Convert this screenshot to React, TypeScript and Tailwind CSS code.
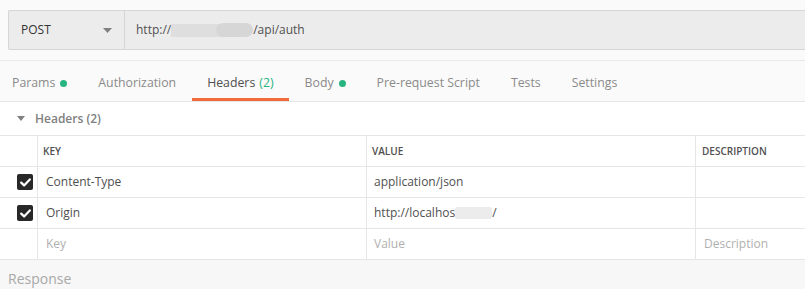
import React from "react";

const font = { fontFamily: '"Open Sans", "Liberation Sans", sans-serif' };

function Check() {
  return (
    <div className="w-[16px] h-[16px] rounded-[2px] bg-[#282828] flex items-center justify-center">
      <svg width="11" height="9" viewBox="0 0 11 9">
        <path d="M1.2 4.6 L4.1 7.4 L9.8 1.4" fill="none" stroke="#fff" strokeWidth="2.2" strokeLinecap="round" strokeLinejoin="round" />
      </svg>
    </div>
  );
}

function Dot() {
  return <span className="inline-block w-[7px] h-[7px] rounded-full bg-[#26b47f] ml-[5px]" />;
}

export default function App() {
  const tabs = [
    { label: "Params", dot: true },
    { label: "Authorization" },
    { label: "Headers", count: "(2)", active: true },
    { label: "Body", dot: true },
    { label: "Pre-request Script" },
    { label: "Tests" },
    { label: "Settings" },
  ];
  return (
    <div className="w-[805px] h-[289px] overflow-hidden bg-[#fafafa] text-[12px] text-[#505050]" style={font}>
      {/* URL bar */}
      <div className="pt-[10px] pl-[8px] pb-[10px] border-b border-[#e9e9e9]">
        <div className="h-[40px] flex bg-[#ececec] border border-[#d6d6d6] border-r-0 rounded-l-[2px]">
          <div className="w-[116px] flex items-center justify-between pl-[12px] pr-[12px] border-r border-[#d6d6d6] text-[#333]">
            <span>POST</span>
            <svg width="9" height="5" viewBox="0 0 9 5">
              <path d="M0 0 L9 0 L4.5 5 Z" fill="#808080" />
            </svg>
          </div>
          <div className="flex items-center pl-[11px] text-[#505050]">
            <span>http://</span>
            <span className="relative inline-block w-[82px] h-[14px]">
              <span className="absolute left-0 top-[1px] w-[55px] h-[13px] bg-[#dedede]" />
              <span className="absolute left-[45px] top-0 w-[37px] h-[14px] rounded-[7px] bg-[#d6d6d6]" />
            </span>
            <span>/api/auth</span>
          </div>
        </div>
      </div>

      {/* Tabs */}
      <div className="flex pl-[12px] gap-[31px] border-b border-[#e6e6e6] h-[41px] text-[12.3px]">
        {tabs.map((t) => (
          <div key={t.label} className={"relative flex items-start pt-[13px] " + (t.active ? "text-[#505050]" : "text-[#8a8a8a]")}>
            <div className="flex items-center h-[18px]">
              <span>{t.label}</span>
              {t.count && <span className="ml-[4px] text-[#26b47f]">{t.count}</span>}
              {t.dot && <Dot />}
            </div>
            {t.active && <div className="absolute -left-[15px] -right-[15px] bottom-0 h-[3px] bg-[#f26b3a]" />}
          </div>
        ))}
      </div>

      {/* Headers section title */}
      <div className="h-[33px] flex items-center pl-[17px] text-[12px] font-semibold text-[#808080] bg-white">
        <svg width="8" height="5" viewBox="0 0 8 5" className="mr-[10px]">
          <path d="M0 0 L8 0 L4 5 Z" fill="#808080" />
        </svg>
        <span>Headers (2)</span>
      </div>

      {/* Table */}
      <div className="bg-white border-t border-[#e6e6e6]">
        <div className="grid grid-cols-[38px_329px_329px_1fr] h-[31px] border-b border-[#e6e6e6] text-[10px] font-semibold text-[#505050]">
          <div className="border-r border-[#e6e6e6]" />
          <div className="border-r border-[#e6e6e6] flex items-center pl-[5px]">KEY</div>
          <div className="border-r border-[#e6e6e6] flex items-center pl-[5px]">VALUE</div>
          <div className="flex items-center pl-[6px]">DESCRIPTION</div>
        </div>
        <div className="grid grid-cols-[38px_329px_329px_1fr] h-[31px] border-b border-[#e6e6e6]">
          <div className="border-r border-[#e6e6e6] flex items-center justify-end pr-[4px]"><Check /></div>
          <div className="border-r border-[#e6e6e6] flex items-center pl-[8px]">Content-Type</div>
          <div className="border-r border-[#e6e6e6] flex items-center pl-[7px]">application/json</div>
          <div />
        </div>
        <div className="grid grid-cols-[38px_329px_329px_1fr] h-[31px] border-b border-[#e6e6e6]">
          <div className="border-r border-[#e6e6e6] flex items-center justify-end pr-[4px]"><Check /></div>
          <div className="border-r border-[#e6e6e6] flex items-center pl-[8px]">Origin</div>
          <div className="border-r border-[#e6e6e6] flex items-center pl-[7px]">
            <span>http://localhos</span>
            <span className="inline-block w-[37px] h-[12px] bg-[#ececec] rounded-[2px]" />
            <span>/</span>
          </div>
          <div />
        </div>
        <div className="grid grid-cols-[38px_329px_329px_1fr] h-[31px] border-b border-[#e6e6e6] text-[#b0b0b0]">
          <div className="border-r border-[#e6e6e6]" />
          <div className="border-r border-[#e6e6e6] flex items-center pl-[8px]">Key</div>
          <div className="border-r border-[#e6e6e6] flex items-center pl-[7px]">Value</div>
          <div className="flex items-center pl-[8px]">Description</div>
        </div>
      </div>

      {/* Response */}
      <div className="bg-[#f7f7f7] h-[40px] pl-[8px] pt-[8px] text-[14px] text-[#a8a8a8]">Response</div>
    </div>
  );
}
